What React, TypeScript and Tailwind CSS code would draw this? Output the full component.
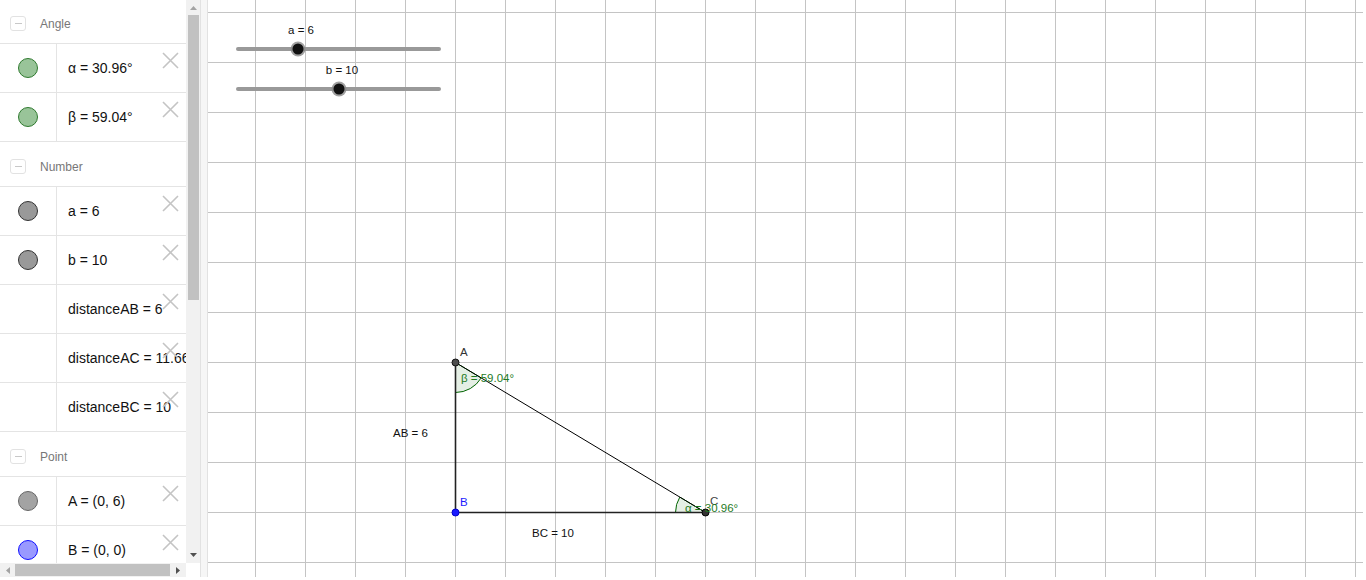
import React from 'react';

type Item = { label: string; dot?: string };
type Group = { title: string; items: Item[] };

const DOTS: Record<string, string> = {
  green: 'bg-[#99c499] border-[#2f7a2f]',
  gray: 'bg-[#999999] border-[#333333]',
  point: 'bg-[#a3a3a3] border-[#666666]',
  blue: 'bg-[#9999ff] border-[#1010ff]',
};

const GROUPS: Group[] = [
  {
    title: 'Angle',
    items: [
      { label: 'α = 30.96°', dot: 'green' },
      { label: 'β = 59.04°', dot: 'green' },
    ],
  },
  {
    title: 'Number',
    items: [
      { label: 'a = 6', dot: 'gray' },
      { label: 'b = 10', dot: 'gray' },
      { label: 'distanceAB = 6' },
      { label: 'distanceAC = 11.66' },
      { label: 'distanceBC = 10' },
    ],
  },
  {
    title: 'Point',
    items: [
      { label: 'A = (0, 6)', dot: 'point' },
      { label: 'B = (0, 0)', dot: 'blue' },
    ],
  },
];

const CloseIcon = () => (
  <svg width="17" height="17" viewBox="0 0 17 17" className="absolute left-[162px] top-[8px]">
    <path d="M1 1L16 16M16 1L1 16" stroke="#c4c4c4" strokeWidth="1.6" />
  </svg>
);

const GroupHeader = ({ title }: { title: string }) => (
  <div className="h-[45px] shrink-0 flex items-center pt-[5px] border-b border-[#e4e4e4] bg-white">
    <div className="ml-[10px] w-[16px] h-[15px] rounded-[3px] border border-[#e2e2e2] flex items-center justify-center">
      <div className="w-[7px] h-px bg-[#c8c8c8]" />
    </div>
    <span className="ml-[14px] text-[12px] text-[#777] font-['Liberation_Sans',Arial,sans-serif]">{title}</span>
  </div>
);

const Row = ({ item }: { item: Item }) => (
  <div className="relative h-[49px] shrink-0 flex border-b border-[#e4e4e4] bg-white">
    <div className="w-[57px] shrink-0 border-r border-[#e4e4e4] flex items-center justify-center">
      {item.dot && <div className={`w-[20px] h-[20px] rounded-full border ${DOTS[item.dot]}`} />}
    </div>
    <div className="flex items-center pl-[11px] whitespace-nowrap text-[14px] text-[#111] font-['Liberation_Sans',Arial,sans-serif]">
      {item.label}
    </div>
    <CloseIcon />
  </div>
);

const Arrow = ({ dir }: { dir: 'up' | 'down' | 'left' | 'right' }) => {
  const d = {
    up: 'M0 4L3.5 0L7 4Z',
    down: 'M0 0L7 0L3.5 4Z',
    left: 'M4 0L4 7L0 3.5Z',
    right: 'M0 0L4 3.5L0 7Z',
  }[dir];
  const w = dir === 'up' || dir === 'down' ? 7 : 4;
  const h = dir === 'up' || dir === 'down' ? 4 : 7;
  return (
    <svg width={w} height={h} viewBox={`0 0 ${w} ${h}`}>
      <path d={d} fill={dir === 'down' || dir === 'right' ? '#505050' : '#a3a3a3'} />
    </svg>
  );
};

const Sidebar = () => (
  <div className="w-[200px] h-[577px] shrink-0 flex flex-col bg-white">
    <div className="flex h-[563px]">
      <div className="w-[186px] h-full overflow-hidden">
        <div className="-mt-px flex flex-col">
          {GROUPS.map((g) => (
            <React.Fragment key={g.title}>
              <GroupHeader title={g.title} />
              {g.items.map((it) => (
                <Row key={it.label} item={it} />
              ))}
            </React.Fragment>
          ))}
        </div>
      </div>
      <div className="w-[14px] h-full bg-[#f1f1f1] flex flex-col items-center">
        <div className="h-[15px] flex items-center justify-center">
          <Arrow dir="up" />
        </div>
        <div className="w-[11px] h-[285px] bg-[#c1c1c1]" />
        <div className="flex-1" />
        <div className="h-[16px] flex items-center justify-center">
          <Arrow dir="down" />
        </div>
      </div>
    </div>
    <div className="flex h-[14px]">
      <div className="w-[186px] h-full bg-[#f1f1f1] flex items-center">
        <div className="w-[15px] flex justify-center">
          <Arrow dir="left" />
        </div>
        <div className="w-[155px] h-[12px] bg-[#c1c1c1]" />
        <div className="flex-1 flex justify-center">
          <Arrow dir="right" />
        </div>
      </div>
      <div className="flex-1 bg-white" />
    </div>
  </div>
);

const Divider = () => (
  <div className="w-[8px] h-[577px] shrink-0 border-l border-r border-[#e2e2e2] bg-[#f6f6f6]" />
);

const FONT = "'Liberation Sans', Arial, sans-serif";

const Slider = ({ y, x, label }: { y: number; x: number; label: string }) => (
  <g>
    <line x1={238} y1={y} x2={439} y2={y} stroke="#999" strokeWidth={4} strokeLinecap="round" />
    <circle cx={x} cy={y} r={7.5} fill="#8a8a8a" opacity={0.8} />
    <circle cx={x} cy={y} r={5.5} fill="#111" />
    <text x={x + 3} y={y - 19} fontSize={11.5} fontFamily={FONT} textAnchor="middle" dominantBaseline="central" fill="#111">
      {label}
    </text>
  </g>
);

const Canvas = () => {
  const vLines = Array.from({ length: 23 }, (_, i) => 255 + i * 50);
  const hLines = Array.from({ length: 12 }, (_, i) => 12 + i * 50);
  return (
    <svg width={1155} height={577} viewBox="208 0 1155 577" className="shrink-0 block bg-white">
      <g stroke="#c4c4c4" strokeWidth={1} shapeRendering="crispEdges">
        {vLines.map((x) => (
          <line key={`v${x}`} x1={x + 0.5} y1={0} x2={x + 0.5} y2={577} />
        ))}
        {hLines.map((y) => (
          <line key={`h${y}`} x1={208} y1={y + 0.5} x2={1363} y2={y + 0.5} />
        ))}
      </g>

      <Slider y={49} x={298} label="a = 6" />
      <Slider y={89} x={339} label="b = 10" />

      {/* angle sectors */}
      <path d="M455.5 362.5 L455.5 392.5 A30 30 0 0 0 481.2 377.9 Z" fill="#006400" fillOpacity={0.1} stroke="#006400" strokeWidth={1} />
      <path d="M705.5 512.5 L675.5 512.5 A30 30 0 0 1 679.8 497.1 Z" fill="#006400" fillOpacity={0.1} stroke="#006400" strokeWidth={1} />

      {/* segments */}
      <line x1={455.5} y1={362.5} x2={705.5} y2={512.5} stroke="#000" strokeWidth={1} />
      <line x1={455.5} y1={362.5} x2={455.5} y2={512.5} stroke="#222" strokeWidth={1.6} />
      <line x1={455.5} y1={512.5} x2={705.5} y2={512.5} stroke="#222" strokeWidth={1.6} />

      {/* points */}
      <circle cx={455.5} cy={362.5} r={3.5} fill="#4d4d4d" stroke="#111" strokeWidth={1} />
      <circle cx={455.5} cy={512.5} r={3.5} fill="#1a1aff" stroke="#0000cc" strokeWidth={1} />
      <circle cx={705.5} cy={512.5} r={3.5} fill="#333" stroke="#000" strokeWidth={1} />

      <g fontFamily={FONT} fontSize={11.5} dominantBaseline="central">
        <text x={460} y={352} fill="#333">A</text>
        <text x={460} y={502} fill="#1a1aff">B</text>
        <text x={710} y={501} fill="#444">C</text>
        <text x={461} y={378} fill="#1e7a1e">β = 59.04°</text>
        <text x={685} y={508} fill="#1e7a1e">α = 30.96°</text>
        <text x={393} y={433} fill="#111">AB = 6</text>
        <text x={532} y={533} fill="#111">BC = 10</text>
      </g>
    </svg>
  );
};

export default function App() {
  return (
    <div className="w-[1366px] h-[580px] flex bg-white overflow-hidden">
      <Sidebar />
      <Divider />
      <Canvas />
    </div>
  );
}
